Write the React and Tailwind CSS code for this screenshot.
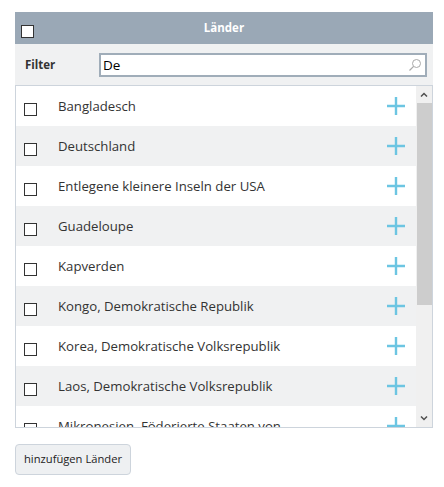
import React from 'react';

const countries = [
  'Bangladesch',
  'Deutschland',
  'Entlegene kleinere Inseln der USA',
  'Guadeloupe',
  'Kapverden',
  'Kongo, Demokratische Republik',
  'Korea, Demokratische Volksrepublik',
  'Laos, Demokratische Volksrepublik',
  'Mikronesien, Föderierte Staaten von',
];

const PlusIcon = () => (
  <svg width="20" height="20" viewBox="0 0 20 20" className="shrink-0">
    <path d="M10 1v18M1 10h18" stroke="#6cc5e2" strokeWidth="2.4" fill="none" />
  </svg>
);

const App = () => {
  return (
    <div className="w-[444px] h-[487px] bg-white pt-3 px-[15px] text-[#333]" style={{ fontFamily: '"Open Sans", "Noto Sans", sans-serif' }}>
      <div className="w-[418px]">
        {/* Header */}
        <div className="h-8 bg-[#9aa8b6] relative flex items-center justify-center">
          <div className="absolute left-[6px] top-[13px] w-[13px] h-[13px] bg-white border border-[#333]" />
          <span className="text-white font-bold text-[11.5px]">Länder</span>
        </div>

        {/* Filter */}
        <div className="h-[41px] bg-[#f0f1f2] flex items-center pl-[10px] pr-[6px]">
          <span className="font-bold text-[11.5px] w-[74px] text-[#333]">Filter</span>
          <div className="flex-1 h-[24px] border-2 border-[#a0adb9] bg-white flex items-center px-[2px]">
            <span className="flex-1 text-[13.5px] text-black leading-none mt-[2px]">De</span>
            <svg width="14" height="14" viewBox="0 0 14 14" className="mr-[1px]">
              <circle cx="8.5" cy="5.5" r="4" stroke="#a9a9a9" strokeWidth="1" fill="none" />
              <path d="M5.6 8.4L1.5 12.5" stroke="#a9a9a9" strokeWidth="1.2" />
            </svg>
          </div>
        </div>

        {/* List */}
        <div className="h-[343px] border border-[#cdd4dc] flex">
          <div className="flex-1 overflow-hidden">
            {countries.map((c, i) => (
              <div key={c} className={`h-10 flex items-center pl-2 pr-[10px] ${i % 2 === 1 ? 'bg-[#f0f1f2]' : 'bg-white'}`}>
                <div className="w-[13px] h-[13px] border border-[#333] bg-white mt-[6px] shrink-0" />
                <span className="ml-[21px] mt-[2px] flex-1 text-[13.2px] text-[#333] whitespace-nowrap">{c}</span>
                <PlusIcon />
              </div>
            ))}
          </div>
          <div className="w-[16px] bg-[#f0f0f0] flex flex-col items-center">
            <div className="h-[17px] flex items-center justify-center">
              <svg width="8" height="5" viewBox="0 0 8 5"><path d="M1 4.5L4 1.5L7 4.5" stroke="#505050" strokeWidth="1.5" fill="none" /></svg>
            </div>
            <div className="w-[15px] h-[202px] bg-[#cdcdcd]" />
            <div className="flex-1" />
            <div className="h-[17px] flex items-center justify-center">
              <svg width="8" height="5" viewBox="0 0 8 5"><path d="M1 0.5L4 3.5L7 0.5" stroke="#505050" strokeWidth="1.5" fill="none" /></svg>
            </div>
          </div>
        </div>

        {/* Button */}
        <button className="mt-[16px] h-[31px] w-[116px] bg-[#eef0f2] border border-[#cdd4dc] rounded-[4px] text-[11.2px] text-[#222]">
          hinzufügen Länder
        </button>
      </div>
    </div>
  );
};

export default App;
